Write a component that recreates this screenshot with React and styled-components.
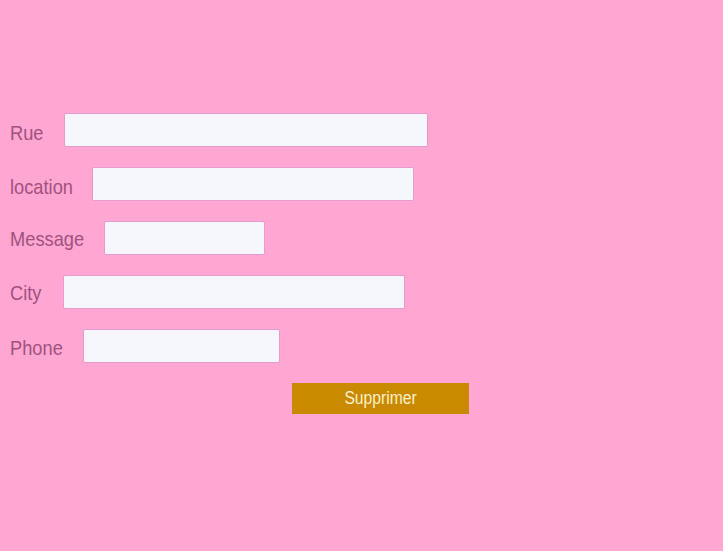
import React from 'react';
import styled, { createGlobalStyle } from 'styled-components';

const GlobalStyle = createGlobalStyle`
	html,
	body {
		margin: 0;
		padding: 0;
		background: #ffa6d2;
		font-family: 'Liberation Sans', Arial, sans-serif;
	}
`;

const Page = styled.div`
	min-height: 551px;
	padding: 113px 0 0 10px;
	box-sizing: border-box;
`;

const Form = styled.form`
	display: flex;
	flex-direction: column;
	gap: 20px;
`;

const Row = styled.div`
	display: flex;
	align-items: center;
`;

// the label text is a narrow face, so squeeze Liberation Sans a bit
const Label = styled.label`
	flex: none;
	width: ${(p) => p.$w}px;
	font-size: 21px;
	line-height: 24px;
	color: #a1527f;
	padding-top: ${(p) => p.$shift}px;
	white-space: nowrap;

	span {
		display: inline-block;
		transform: scaleX(0.87);
		transform-origin: left center;
	}
`;

const Input = styled.input`
	box-sizing: border-box;
	width: ${(p) => p.$w}px;
	height: 34px;
	background: #f5f7fc;
	border: 1px solid #e59ccb;
	border-radius: 2px;
	outline: none;
`;

const Button = styled.button`
	width: 177px;
	height: 31px;
	margin: 0 0 0 282px;
	padding: 0;
	background: #c98a00;
	color: #fbf1c8;
	border: none;
	font-family: inherit;
	font-size: 18px;
	cursor: pointer;

	span {
		display: inline-block;
		transform: scaleX(0.87);
	}
`;

const fields = [
	{ name: 'Rue', label: 54, width: 364, shift: 6 },
	{ name: 'location', label: 82, width: 322, shift: 5 },
	{ name: 'Message', label: 94, width: 161, shift: 1 },
	{ name: 'City', label: 53, width: 342, shift: 1 },
	{ name: 'Phone', label: 73, width: 197, shift: 4 },
];

export default function App() {
	return (
		<>
			<GlobalStyle />
			<Page>
				<Form onSubmit={(e) => e.preventDefault()}>
					{fields.map((f) => (
						<Row key={f.name}>
							<Label $w={f.label} $shift={f.shift}>
								<span>{f.name}</span>
							</Label>
							<Input $w={f.width} />
						</Row>
					))}
					<div>
						<Button type="button">
							<span>Supprimer</span>
						</Button>
					</div>
				</Form>
			</Page>
		</>
	);
}
